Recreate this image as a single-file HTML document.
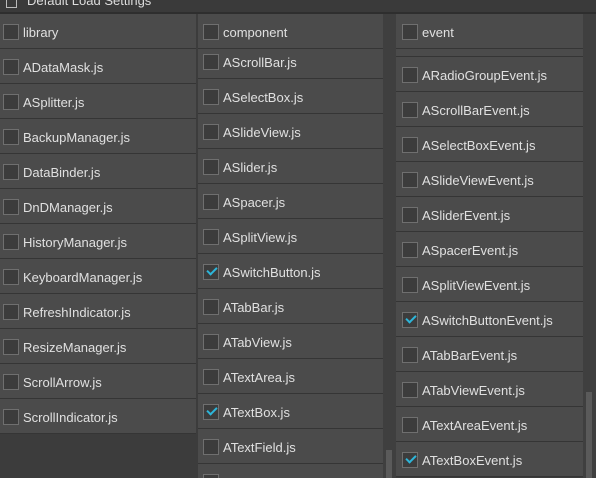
<!DOCTYPE html>
<html><head><meta charset="utf-8"><style>
body{margin:0;width:596px;height:478px;overflow:hidden;background:#3c3c3c;font-family:"Liberation Sans",sans-serif;position:relative}
.title{position:absolute;left:0;top:0;width:596px;height:12px;background:#3a3a3a;border-bottom:2px solid #2e2e2e}
.title span{position:absolute;left:27px;top:-7px;color:#ddd;font-size:13px}
.title i{position:absolute;left:6px;top:-4px;width:9px;height:10px;border:1px solid #bbb}
.col{position:absolute;top:14px;overflow:hidden}
.r{position:absolute;left:0;right:0;height:34px;background:#4b4b4b;border-bottom:1px solid #353535;color:#e0e0e0;font-size:13px;line-height:38px}
.r b{position:absolute;left:3px;top:10px;width:14px;height:14px;border:1px solid #6f6f6f;background:#3c3c3c}
.r span{position:absolute;left:23px}
.c2 .r b{left:5px}.c2 .r span{left:25px}
.c3 .r b{left:6px}.c3 .r span{left:26px}
.r.c b::after{content:"";position:absolute;left:3px;top:2px;width:8px;height:4px;border-left:2px solid #2db6da;border-bottom:2px solid #2db6da;transform:rotate(-45deg)}
.sb{position:absolute;top:14px;width:13px;height:464px;background:#3f3f3f}
.th{position:absolute;background:#5a5a5a;width:6px;left:3px}
</style></head><body>
<div class="title"><i></i><span>Default Load Settings</span></div>

<div class="col" style="left:0;width:196px;height:464px">
<div class="r" style="top:0"><b></b><span>library</span></div>
<div class="r" style="top:35px"><b></b><span>ADataMask.js</span></div>
<div class="r" style="top:70px"><b></b><span>ASplitter.js</span></div>
<div class="r" style="top:105px"><b></b><span>BackupManager.js</span></div>
<div class="r" style="top:140px"><b></b><span>DataBinder.js</span></div>
<div class="r" style="top:175px"><b></b><span>DnDManager.js</span></div>
<div class="r" style="top:210px"><b></b><span>HistoryManager.js</span></div>
<div class="r" style="top:245px"><b></b><span>KeyboardManager.js</span></div>
<div class="r" style="top:280px"><b></b><span>RefreshIndicator.js</span></div>
<div class="r" style="top:315px"><b></b><span>ResizeManager.js</span></div>
<div class="r" style="top:350px"><b></b><span>ScrollArrow.js</span></div>
<div class="r" style="top:385px"><b></b><span>ScrollIndicator.js</span></div>
</div>

<div class="col c2" style="left:198px;width:185px;height:464px">
<div class="r" style="top:30px"><b></b><span>AScrollBar.js</span></div>
<div class="r" style="top:65px"><b></b><span>ASelectBox.js</span></div>
<div class="r" style="top:100px"><b></b><span>ASlideView.js</span></div>
<div class="r" style="top:135px"><b></b><span>ASlider.js</span></div>
<div class="r" style="top:170px"><b></b><span>ASpacer.js</span></div>
<div class="r" style="top:205px"><b></b><span>ASplitView.js</span></div>
<div class="r c" style="top:240px"><b></b><span>ASwitchButton.js</span></div>
<div class="r" style="top:275px"><b></b><span>ATabBar.js</span></div>
<div class="r" style="top:310px"><b></b><span>ATabView.js</span></div>
<div class="r" style="top:345px"><b></b><span>ATextArea.js</span></div>
<div class="r c" style="top:380px"><b></b><span>ATextBox.js</span></div>
<div class="r" style="top:415px"><b></b><span>ATextField.js</span></div>
<div class="r" style="top:450px"><b></b><span></span></div>
<div class="r" style="top:0"><b></b><span>component</span></div>
</div>
<div class="sb" style="left:383px"><div class="th" style="top:436px;height:28px"></div></div>

<div class="col c3" style="left:396px;width:187px;height:464px">
<div class="r" style="top:8px"><b></b><span></span></div>
<div class="r" style="top:43px"><b></b><span>ARadioGroupEvent.js</span></div>
<div class="r" style="top:78px"><b></b><span>AScrollBarEvent.js</span></div>
<div class="r" style="top:113px"><b></b><span>ASelectBoxEvent.js</span></div>
<div class="r" style="top:148px"><b></b><span>ASlideViewEvent.js</span></div>
<div class="r" style="top:183px"><b></b><span>ASliderEvent.js</span></div>
<div class="r" style="top:218px"><b></b><span>ASpacerEvent.js</span></div>
<div class="r" style="top:253px"><b></b><span>ASplitViewEvent.js</span></div>
<div class="r c" style="top:288px"><b></b><span>ASwitchButtonEvent.js</span></div>
<div class="r" style="top:323px"><b></b><span>ATabBarEvent.js</span></div>
<div class="r" style="top:358px"><b></b><span>ATabViewEvent.js</span></div>
<div class="r" style="top:393px"><b></b><span>ATextAreaEvent.js</span></div>
<div class="r c" style="top:428px"><b></b><span>ATextBoxEvent.js</span></div>
<div class="r" style="top:0"><b></b><span>event</span></div>
</div>
<div class="sb" style="left:583px"><div class="th" style="top:378px;height:86px"></div></div>
</body></html>
